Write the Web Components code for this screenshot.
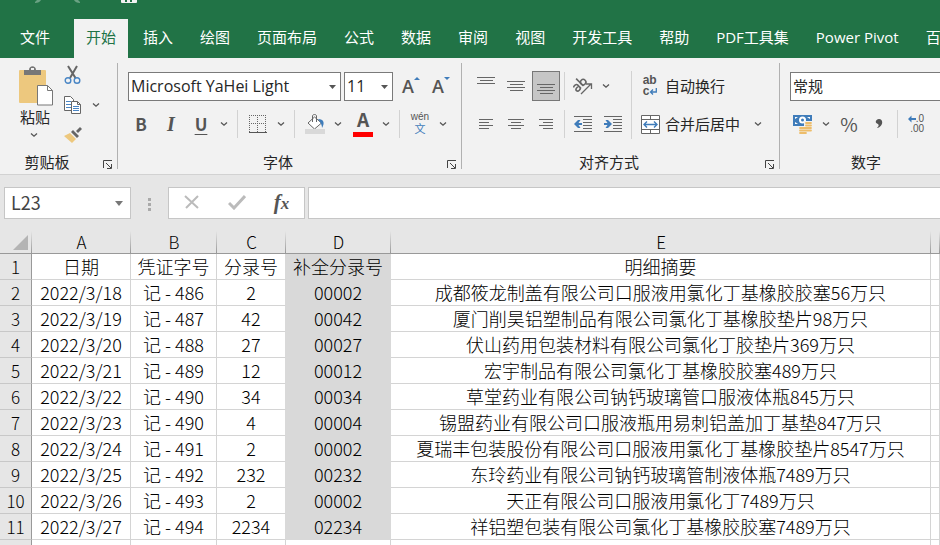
<!DOCTYPE html>
<html lang="zh-CN">
<head>
<meta charset="utf-8">
<title>Excel</title>
<style>
  * { box-sizing: border-box; }

  body {
    margin: 0;
    height: 100vh;
    overflow: hidden;
    background: #e6e6e6;
    color: #262626;
    font: 15px/20px "Noto Sans CJK SC", sans-serif;
  }
</style>
</head>
<body>
<excel-app></excel-app>

<script>
const CHEVRON = `
  <svg width="8" height="6" viewBox="0 0 8 6">
    <path d="M1 1.5L4 4.2L7 1.5" fill="none" stroke="#555" stroke-width="1.3"/>
  </svg>`;

const lines = (rows) => rows
  .map(([x, y, w]) => `<rect x="${x}" y="${y}" width="${w}" height="1"/>`)
  .join("");

const ICONS = {
  paste: `
    <svg width="36" height="40" viewBox="0 0 36 40">
      <rect x="1" y="4" width="27" height="33" rx="1" fill="#edc87e"/>
      <path d="M6 4h5c0-5 7-5 7 0h5v5H6z" fill="#777"/>
      <rect x="13" y="2" width="3" height="2" fill="#f2f2f2"/>
      <path d="M19.500 19.500h10l5 5v14.500h-15z" fill="#fff" stroke="#777"/>
      <path d="M29.500 19.500v5h5" fill="none" stroke="#777"/>
    </svg>`,
  cut: `
    <svg width="18" height="20" viewBox="0 0 18 20">
      <path d="M4 1l7.500 12M13 1L6 13" fill="none" stroke="#666" stroke-width="2"/>
      <circle cx="4" cy="15.500" r="2.800" fill="none" stroke="#4a86c5" stroke-width="1.400"/>
      <circle cx="13" cy="15.500" r="2.800" fill="none" stroke="#4a86c5" stroke-width="1.400"/>
    </svg>`,
  copy: `
    <svg width="18" height="20" viewBox="0 0 18 20">
      <path d="M.500 1.500h6l3 3v11h-9z" fill="#fff" stroke="#666"/>
      <path d="M2 6.500h5M2 9.500h5M2 12.500h5" stroke="#4a86c5"/>
      <path d="M7.500 6.500h6l3 3v9h-9z" fill="#fff" stroke="#666"/>
      <path d="M13.500 6.500v3h3" fill="none" stroke="#666"/>
      <path d="M9 11.500h6M9 13.500h6M9 15.500h6" stroke="#4a86c5"/>
    </svg>`,
  brush: `
    <svg width="18" height="18" viewBox="0 0 18 18">
      <path d="M0 10l6-3 6 6-4 4z" fill="#edc87e"/>
      <path d="M7 6l2-2 6 6-2 2zM12 5l4-4 2 2-4 4z" fill="#666"/>
    </svg>`,
  bold: `<b>B</b>`,
  italic: `<i>I</i>`,
  underline: `<u>U</u>`,
  grow: `
    <span class="big">A</span>
    <svg width="6" height="18" viewBox="0 0 6 18"><path d="M0 3l3-3 3 3z" fill="#3f7cba"/></svg>`,
  shrink: `
    <span class="big">A</span>
    <svg width="6" height="18" viewBox="0 0 6 18"><path d="M0 0h6l-3 3z" fill="#3f7cba"/></svg>`,
  border: `
    <svg width="18" height="18" viewBox="0 0 18 18">
      <path d="M0 .500h18M0 8.500h18M.500 0v17M8.500 0v17M16.500 0v17" stroke="#666" stroke-dasharray="1 1"/>
      <path d="M0 17.500h18" stroke="#555"/>
    </svg>`,
  fill: `
    <svg width="20" height="20" viewBox="0 0 20 20">
      <path d="M9.500 3l7 6-7 6-6.500-6z" fill="#fff" stroke="#666"/>
      <path d="M7.500 8V2c0-2 4-2 4 0v6" fill="none" stroke="#666"/>
      <path d="M13 5c6 0 7 4 4 9 0-3-1-5-4-9z" fill="#3f7cba"/>
      <rect y="15" width="20" height="5" fill="#d9d9d9"/>
    </svg>`,
  color: `
    <span class="ink">A</span>`,
  phonetic: `
    <span class="wen">wén</span><span class="zi">文</span>`,
  top: `<svg width="18" height="18" fill="#666">${lines([[0, 0, 18], [3, 3, 13], [0, 6, 18]])}</svg>`,
  middle: `<svg width="18" height="18" fill="#666">${lines([[0, 4, 18], [3, 7, 13], [0, 10, 18], [3, 13, 13]])}</svg>`,
  bottom: `<svg width="18" height="18" fill="#666">${lines([[0, 7, 18], [3, 10, 13], [0, 13, 18], [3, 16, 13]])}</svg>`,
  left: `<svg width="16" height="12" fill="#666">${lines([[1, 1, 14], [1, 4, 10], [1, 7, 14], [1, 10, 10]])}</svg>`,
  center: `<svg width="16" height="12" fill="#666">${lines([[0, 1, 16], [3, 4, 10], [0, 7, 16], [3, 10, 10]])}</svg>`,
  right: `<svg width="16" height="12" fill="#666">${lines([[1, 1, 14], [5, 4, 10], [1, 7, 14], [5, 10, 10]])}</svg>`,
  orient: `
    <svg width="20" height="20" viewBox="0 0 20 20">
      <g transform="rotate(-45 7 10)" fill="none" stroke="#666" stroke-width="1.600">
        <path d="M1.500 6.500c1-1 4.500-1 4.500 1v5M6 9H3.500c-3 0-3 3.500 0 3.500 1 0 2.500-.500 2.500-2"/>
        <path d="M9.500 2v10.500"/><circle cx="12" cy="9.500" r="2.700"/>
      </g>
      <path d="M8 18l10-10M13 8h5.500v5" fill="none" stroke="#666" stroke-width="1.300"/>
    </svg>`,
  outdent: `
    <svg width="18" height="18" fill="#666">${lines([[0, 1, 18], [9, 4, 9], [9, 7, 9], [9, 10, 9], [9, 13, 9], [0, 16, 18]])}
      <path d="M0 9l4-4h2.500L4.500 8H8v2H4.500l2 3H4z" fill="#3f7cba"/>
    </svg>`,
  indent: `
    <svg width="18" height="18" fill="#666">${lines([[0, 1, 18], [9, 4, 9], [9, 7, 9], [9, 10, 9], [9, 13, 9], [0, 16, 18]])}
      <path d="M8 9L4 5H1.500l2 3H0v2h3.500l-2 3H4z" fill="#3f7cba"/>
    </svg>`,
  wrap: `
    <span class="abc"><span>ab</span><span>c<svg width="8" height="8" viewBox="0 0 8 8">
      <path d="M7.300 0v4H2M4 1.500L1.500 4 4 6.500" fill="none" stroke="#3f7cba" stroke-width="1.300"/>
    </svg></span></span>`,
  merge: `
    <svg width="19" height="19" viewBox="0 0 19 19">
      <path d="M.500.500h18v18H.500zM.500 4.500h18M.500 14.500h18M9.500.500v4M9.500 14.500v4" fill="#fff" stroke="#666"/>
      <path d="M3 9.500h13M6 6.500l-3 3 3 3M13 6.500l3 3-3 3" fill="none" stroke="#3f7cba" stroke-width="1.400"/>
    </svg>`,
  money: `
    <svg width="20" height="20" viewBox="0 0 20 20">
      <rect y="1" width="19" height="11" fill="#3f7cba"/>
      <path d="M2 3h3L2 5zM17 3h-3l3 2zM2 10V8l3 2z" fill="#fff"/>
      <circle cx="9.500" cy="6" r="3.500" fill="#fff"/><circle cx="9.500" cy="6" r="1.500" fill="#3f7cba"/>
      <rect x="11" y="7" width="9" height="10" fill="#f2f2f2"/>
      <rect x="5" y="12" width="10" height="8" fill="#f2f2f2"/>
      <path d="M13 9h5M13 11.500h5M13 14h5M13 16.500h5M7 14h6M7 16.500h6M7 19h6" stroke="#edbd6b" stroke-width="1.800" stroke-linecap="round"/>
    </svg>`,
  percent: `<span class="percent">%</span>`,
  comma: `
    <svg width="8" height="12" viewBox="0 0 8 12">
      <path d="M4 1c5 0 4 8-2 9 2-2 2-3 1-4-4-1-2-5 1-5z" fill="#555"/>
    </svg>`,
  decimal: `
    <span class="dec">
      <span><svg width="8" height="8" viewBox="0 0 8 8"><path d="M0 4l3.500-3.500v2.500H8v2H3.500v2.500z" fill="#3f7cba"/></svg>.0</span>
      <span>.00</span>
    </span>`
};

class ToolButton extends HTMLElement {
  constructor() {
    super();

    this.attachShadow({ mode: "open" });
  }

  connectedCallback() {
    const label = this.getAttribute("label") || "";
    const icon = ICONS[this.getAttribute("icon")];
    const menu = this.hasAttribute("menu");
    const face = this.hasAttribute("caption") ? "" : `aria-label="${label}"`;

    this.shadowRoot.innerHTML = `
      <style>
        :host {
          display: flex;
          height: 30px;
          flex: none;
        }

        button {
          display: flex;
          align-items: center;
          justify-content: center;
          padding: 0;
          border: 0;
          background: none;
          color: #262626;
          font: inherit;
          white-space: nowrap;
        }

        svg { display: block; flex: none; }
        .icon {
          display: flex;
          align-items: center;
          justify-content: center;
          width: 30px;
          color: #555;
        }
        .menu { width: 16px; }
        :host([caption][menu]) .menu { width: 36px; }
        :host([pressed]) { padding: 0 1px; }
        :host([pressed]) button {
          background: #c6c6c6;
          border: 1px solid #777;
        }
        :host([pressed]) .icon { width: 26px; }

        :host([large]) {
          height: auto;
          flex-direction: column;
        }
        :host([large]) button { flex-direction: column; }
        :host([large]) .icon {
          justify-content: flex-end;
          width: 38px;
          height: 42px;
        }
        :host([large]) .menu { width: auto; height: 16px; }

        b, i, u { font-size: 17px; font-weight: 700; }
        i { font-family: "Liberation Serif", serif; font-size: 20px; }
        u { text-underline-offset: 3px; text-decoration-thickness: 1px; }
        .big {
          font-family: "Open Sans", sans-serif;
          font-size: 18px;
          font-weight: 600;
        }
        .ink {
          width: 20px;
          height: 20px;
          border-bottom: 5px solid #f00;
          font-size: 19px;
          font-weight: 700;
          line-height: 14px;
          text-align: center;
        }
        .icon-phonetic { flex-direction: column; }
        .wen {
          font-family: "Liberation Sans", sans-serif;
          font-size: 10px;
          line-height: 8px;
        }
        .zi { color: #3f7cba; font-size: 11px; line-height: 14px; }
        .abc {
          font-family: "Liberation Sans", sans-serif;
          font-size: 12px;
          font-weight: 700;
          line-height: 11px;
        }
        .abc span, .dec span { display: flex; align-items: center; }
        .percent { font-size: 19px; }
        .dec {
          font-family: "Liberation Sans", sans-serif;
          font-size: 10px;
          line-height: 10px;
        }
        .dec span { justify-content: flex-end; }
      </style>

      <button type="button" ${face}>
        <span class="icon icon-${this.getAttribute("icon")}">${icon}</span>
        ${this.hasAttribute("caption") ? label : ""}
      </button>
      ${menu ? `<button type="button" class="menu" aria-label="${label} ▾">${CHEVRON}</button>` : ""}
    `;
  }
}

class RibbonSelect extends HTMLElement {
  constructor() {
    super();

    this.attachShadow({ mode: "open" });
  }

  connectedCallback() {
    this.shadowRoot.innerHTML = `
      <style>
        :host {
          display: block;
          position: relative;
          flex: none;
        }

        select {
          width: 100%;
          height: 29px;
          padding: 0 2px;
          appearance: none;
          border: 1px solid #7a7a7a;
          border-radius: 0;
          background: #fff;
          color: #262626;
          font: 16px "Open Sans", "Noto Sans CJK SC", sans-serif;
        }
        :host([small]) select { font-size: 15px; }

        svg {
          position: absolute;
          right: 5px;
          top: 13px;
          pointer-events: none;
        }
      </style>

      <select aria-label="${this.getAttribute("label")}">
        <option>${this.getAttribute("value")}</option>
      </select>
      <svg width="7" height="4"><path d="M0 0h7L3.500 4z" fill="#555"/></svg>
    `;
  }
}

class RibbonGroup extends HTMLElement {
  constructor() {
    super();

    this.attachShadow({ mode: "open" });
  }

  connectedCallback() {
    this.shadowRoot.innerHTML = `
      <style>
        :host {
          display: flex;
          flex-direction: column;
          flex: none;
          position: relative;
        }

        /* the divider stops short of the ribbon edges */
        :host::after {
          content: "";
          position: absolute;
          right: 0;
          top: 5px;
          bottom: 5px;
          border-right: 1px solid #b1b1b1;
        }

        .body { height: 94px; }
        footer {
          display: flex;
          align-items: center;
          height: 22px;
        }
        .name {
          flex: 1;
          padding-bottom: 2px;
          text-align: center;
        }
        button {
          width: 24px;
          height: 16px;
          padding: 3px 0 0 9px;
          border: 0;
          background: none;
        }
        svg { display: block; }
      </style>

      <div class="body"><slot></slot></div>
      <footer>
        <span class="name">${this.getAttribute("name")}</span>
        <button type="button" aria-label="${this.getAttribute("name")}">
          <svg width="10" height="10" viewBox="0 0 10 10">
            <path d="M.500 8V.500H9M3 3l5 5M8.500 4v4.500H4" fill="none" stroke="#444"/>
          </svg>
        </button>
      </footer>
    `;
  }
}

class RibbonTabs extends HTMLElement {
  constructor() {
    super();

    this.attachShadow({ mode: "open" });
  }

  connectedCallback() {
    const tabs = this.getAttribute("tabs").split(",");
    const active = this.getAttribute("active");

    this.shadowRoot.innerHTML = `
      <style>
        :host {
          display: block;
          background: #217346;
          overflow: hidden;
          font-family: "Open Sans", "Noto Sans CJK SC", sans-serif;
        }

        .quick { height: 19px; }
        .quick svg { display: block; }
        nav {
          display: flex;
          gap: 3px;
          padding-left: 8px;
        }
        a {
          flex: none;
          padding: 8px 12px 11px;
          color: #fff;
          text-decoration: none;
          white-space: nowrap;
        }
        a:first-child { margin-right: 9px; }
        a.active { background: #f2f2f2; color: #217346; }
      </style>

      <div class="quick">
        <svg width="140" height="4" viewBox="0 0 140 4">
          <path d="M35 3c3 0 5-1 6-3h-4l-2 2zM80 3c-3 0-5-1-6-3h4l2 2z" fill="#6aa283"/>
          <path d="M121 0h16v2q0 1-1 1h-14q-1 0-1-1z" fill="#f2f2f2"/>
          <path d="M125 0h2v2h-2zM130 0h2v2h-2z" fill="#217346"/>
        </svg>
      </div>
      <nav>
        ${tabs.map((tab) => `
          <a href="#" class="${tab === active ? "active" : ""}">${tab}</a>
        `).join("")}
      </nav>
    `;
  }
}

class ExcelRibbon extends HTMLElement {
  constructor() {
    super();

    this.attachShadow({ mode: "open" });
  }

  connectedCallback() {
    this.shadowRoot.innerHTML = `
      <style>
        :host {
          display: flex;
          overflow: hidden;
          background: #f2f2f2;
          border-bottom: 1px solid #d2d2d2;
        }

        .clip { width: 118px; }
        .font { width: 344px; }
        .align { width: 318px; }
        .number { width: 196px; }

        .paste, .stack, .rows { display: flex; }
        .paste { padding: 7px 0 0 16px; gap: 4px; }
        .stack { flex-direction: column; margin-top: -5px; }
        .rows {
          flex-direction: column;
          gap: 8px;
          padding-top: 13px;
        }
        .row { display: flex; align-items: center; height: 30px; }
        .pair { display: flex; gap: 2px; }
        .combos { gap: 3px; padding-left: 2px; }
        .combos tool-button + tool-button { margin-left: -3px; }
        .columns { display: flex; padding-left: 9px; }
        .inset { padding-left: 8px; }

        hr {
          flex: none;
          width: 1px;
          height: 28px;
          margin: 0 5px;
          border: 0;
          background: #d2d2d2;
        }
        hr.thin { margin: 0 3px; }
        hr.tall { height: 68px; margin: 13px 3px 0; }

        .name { width: 213px; }
        .size { width: 49px; }
        .format { width: 176px; }
      </style>

      <ribbon-group class="clip" name="剪贴板">
        <div class="paste">
          <tool-button large caption menu icon="paste" label="粘贴"></tool-button>
          <div class="stack">
            <tool-button icon="cut" label="剪切"></tool-button>
            <tool-button icon="copy" label="复制" menu></tool-button>
            <tool-button icon="brush" label="格式刷"></tool-button>
          </div>
        </div>
      </ribbon-group>

      <ribbon-group class="font" name="字体">
        <div class="rows inset">
          <div class="row combos">
            <ribbon-select class="name" label="字体" value="Microsoft YaHei Light"></ribbon-select>
            <ribbon-select class="size" label="字号" value="11"></ribbon-select>
            <tool-button icon="grow" label="增大字号"></tool-button>
            <tool-button icon="shrink" label="减小字号"></tool-button>
          </div>
          <div class="row">
            <tool-button icon="bold" label="加粗"></tool-button>
            <tool-button icon="italic" label="倾斜"></tool-button>
            <tool-button icon="underline" label="下划线" menu></tool-button>
            <hr>
            <tool-button icon="border" label="边框" menu></tool-button>
            <hr>
            <div class="pair">
              <tool-button icon="fill" label="填充颜色" menu></tool-button>
              <tool-button icon="color" label="字体颜色" menu></tool-button>
            </div>
            <hr>
            <tool-button icon="phonetic" label="拼音" menu></tool-button>
          </div>
        </div>
      </ribbon-group>

      <ribbon-group class="align" name="对齐方式">
        <div class="columns">
          <div class="rows">
            <div class="row">
              <tool-button icon="top" label="顶端对齐"></tool-button>
              <tool-button icon="middle" label="垂直居中"></tool-button>
              <tool-button icon="bottom" label="底端对齐" pressed></tool-button>
              <hr class="thin">
              <tool-button icon="orient" label="方向" menu></tool-button>
            </div>
            <div class="row">
              <tool-button icon="left" label="左对齐"></tool-button>
              <tool-button icon="center" label="居中"></tool-button>
              <tool-button icon="right" label="右对齐"></tool-button>
              <hr class="thin">
              <tool-button icon="outdent" label="减少缩进量"></tool-button>
              <tool-button icon="indent" label="增加缩进量"></tool-button>
            </div>
          </div>
          <hr class="tall">
          <div class="rows">
            <tool-button icon="wrap" label="自动换行" caption></tool-button>
            <tool-button icon="merge" label="合并后居中" caption menu></tool-button>
          </div>
        </div>
      </ribbon-group>

      <ribbon-group class="number" name="数字">
        <div class="rows inset">
          <div class="row combos">
            <ribbon-select class="format" small label="数字格式" value="常规"></ribbon-select>
          </div>
          <div class="row">
            <tool-button icon="money" label="会计数字格式" menu></tool-button>
            <tool-button icon="percent" label="百分比样式"></tool-button>
            <tool-button icon="comma" label="千位分隔样式"></tool-button>
            <hr class="thin">
            <tool-button icon="decimal" label="增加小数位数"></tool-button>
          </div>
        </div>
      </ribbon-group>
    `;
  }
}

class FormulaBar extends HTMLElement {
  constructor() {
    super();

    this.attachShadow({ mode: "open" });
  }

  connectedCallback() {
    this.shadowRoot.innerHTML = `
      <style>
        * { box-sizing: border-box; }
        :host {
          display: flex;
          padding: 12px 0 12px 4px;
          background: #e6e6e6;
        }

        input {
          height: 32px;
          border: 1px solid #c6c6c6;
          background: #fff;
          color: #444;
          font: inherit;
          font-size: 18px;
          outline: none;
        }
        .cell { position: relative; width: 127px; }
        .cell input { width: 100%; padding: 0 6px 2px; }
        .cell svg { position: absolute; right: 8px; top: 14px; }
        .dots { width: 37px; padding: 9px 0 0 17px; }
        .tools {
          display: flex;
          width: 137px;
          margin-right: 3px;
          border: 1px solid #c6c6c6;
          background: #fff;
        }
        button {
          flex: 1;
          padding: 0;
          border: 0;
          background: none;
        }
        .fx {
          color: #555;
          font: italic bold 21px/28px "Liberation Serif", serif;
        }
        .fx small { font-size: 17px; }
        .formula { flex: 1; min-width: 0; border-right: 0; }
      </style>

      <div class="cell">
        <input aria-label="名称框" value="L23">
        <svg width="8" height="5"><path d="M0 0h8L4 5z" fill="#777"/></svg>
      </div>
      <div class="dots">
        <svg width="3" height="14" fill="#aaa">
          <rect width="3" height="3"/><rect y="5" width="3" height="3"/><rect y="10" width="3" height="3"/>
        </svg>
      </div>
      <div class="tools">
        <button type="button" aria-label="取消">
          <svg width="16" height="16" viewBox="0 0 16 16">
            <path d="M1 2l13 12M14 2L2 14" stroke="#bbb" stroke-width="2"/>
          </svg>
        </button>
        <button type="button" aria-label="输入">
          <svg width="18" height="16" viewBox="0 0 18 16">
            <path d="M1 9l5 5L17 2" fill="none" stroke="#bbb" stroke-width="3"/>
          </svg>
        </button>
        <button type="button" class="fx" aria-label="插入函数">f<small>x</small></button>
      </div>
      <input class="formula" aria-label="编辑栏">
    `;
  }
}

class SheetGrid extends HTMLElement {
  constructor() {
    super();

    this.attachShadow({ mode: "open" });

    this.rows = [
      ["日期", "凭证字号", "分录号", "补全分录号", "明细摘要"],
      ["2022/3/18", "记 - 486", "2", "00002", "成都筱龙制盖有限公司口服液用氯化丁基橡胶胶塞56万只"],
      ["2022/3/19", "记 - 487", "42", "00042", "厦门削昊铝塑制品有限公司氯化丁基橡胶垫片98万只"],
      ["2022/3/20", "记 - 488", "27", "00027", "伏山药用包装材料有限公司氯化丁胶垫片369万只"],
      ["2022/3/21", "记 - 489", "12", "00012", "宏宇制品有限公司氯化丁基橡胶胶塞489万只"],
      ["2022/3/22", "记 - 490", "34", "00034", "草堂药业有限公司钠钙玻璃管口服液体瓶845万只"],
      ["2022/3/23", "记 - 490", "4", "00004", "锡盟药业有限公司口服液瓶用易刺铝盖加丁基垫847万只"],
      ["2022/3/24", "记 - 491", "2", "00002", "夏瑞丰包装股份有限公司口服液用氯化丁基橡胶垫片8547万只"],
      ["2022/3/25", "记 - 492", "232", "00232", "东玲药业有限公司钠钙玻璃管制液体瓶7489万只"],
      ["2022/3/26", "记 - 493", "2", "00002", "天正有限公司口服液用氯化丁7489万只"],
      ["2022/3/27", "记 - 494", "2234", "02234", "祥铝塑包装有限公司氯化丁基橡胶胶塞7489万只"]
    ];
  }

  connectedCallback() {
    const columns = ["A", "B", "C", "D", "E", ""];

    this.shadowRoot.innerHTML = `
      <style>
        * { box-sizing: border-box; }
        :host { display: block; }

        table {
          width: 100%;
          table-layout: fixed;
          border-spacing: 0;
          background: #fff;
          color: #000;
          font-size: 18px;
          font-weight: 300;
          line-height: 22px;
        }
        .head { width: 32px; }
        .a { width: 99px; }
        .b { width: 86px; }
        .c { width: 69px; }
        .d { width: 105px; }
        .e { width: 540px; }

        th, td {
          height: 26px;
          padding: 0;
          text-align: center;
          white-space: nowrap;
        }
        td {
          padding-bottom: 2px;
          border-right: 1px solid #d4d4d4;
          border-bottom: 1px solid #d4d4d4;
        }
        th {
          background: #e6e6e6;
          font-size: 17px;
          font-weight: 300;
        }
        thead th {
          height: 23px;
          border-bottom: 1px solid #999;
          background: linear-gradient(#e6e6e6, #999) right / 1px 100% no-repeat #e6e6e6;
        }
        tbody th {
          border-right: 1px solid #999;
          border-bottom: 1px solid #c8c8c8;
        }
        thead svg { display: block; margin-left: 13px; }

        .filled td:nth-child(4) { border-right-color: #d9d9d9; }
        .filled td:nth-child(5) {
          background: #d9d9d9;
          border-color: #d9d9d9;
        }
      </style>

      <table>
        <colgroup>
          <col class="head"><col class="a"><col class="b"><col class="c"><col class="d"><col class="e"><col>
        </colgroup>
        <thead>
          <tr>
            <th><svg width="15" height="15"><path d="M15 0v15H0z" fill="#b4b4b4"/></svg></th>
            ${columns.map((column) => `<th scope="col">${column}</th>`).join("")}
          </tr>
        </thead>
        <tbody>
          ${this.rows.map((row, index) => `
            <tr class="filled">
              <th scope="row">${index + 1}</th>
              ${row.map((value) => `<td>${value}</td>`).join("")}
              <td></td>
            </tr>
          `).join("")}
          <tr><th></th>${columns.map(() => "<td></td>").join("")}</tr>
        </tbody>
      </table>
    `;
  }
}

class ExcelApp extends HTMLElement {
  constructor() {
    super();

    this.attachShadow({ mode: "open" });
  }

  connectedCallback() {
    this.shadowRoot.innerHTML = `
      <style>
        :host { display: block; }
      </style>

      <ribbon-tabs
        active="开始"
        tabs="文件,开始,插入,绘图,页面布局,公式,数据,审阅,视图,开发工具,帮助,PDF工具集,Power Pivot,百度网盘">
      </ribbon-tabs>
      <excel-ribbon></excel-ribbon>
      <formula-bar></formula-bar>
      <sheet-grid></sheet-grid>
    `;
  }
}

customElements.define("tool-button", ToolButton);
customElements.define("ribbon-select", RibbonSelect);
customElements.define("ribbon-group", RibbonGroup);
customElements.define("ribbon-tabs", RibbonTabs);
customElements.define("excel-ribbon", ExcelRibbon);
customElements.define("formula-bar", FormulaBar);
customElements.define("sheet-grid", SheetGrid);
customElements.define("excel-app", ExcelApp);
</script>
</body>
</html>
